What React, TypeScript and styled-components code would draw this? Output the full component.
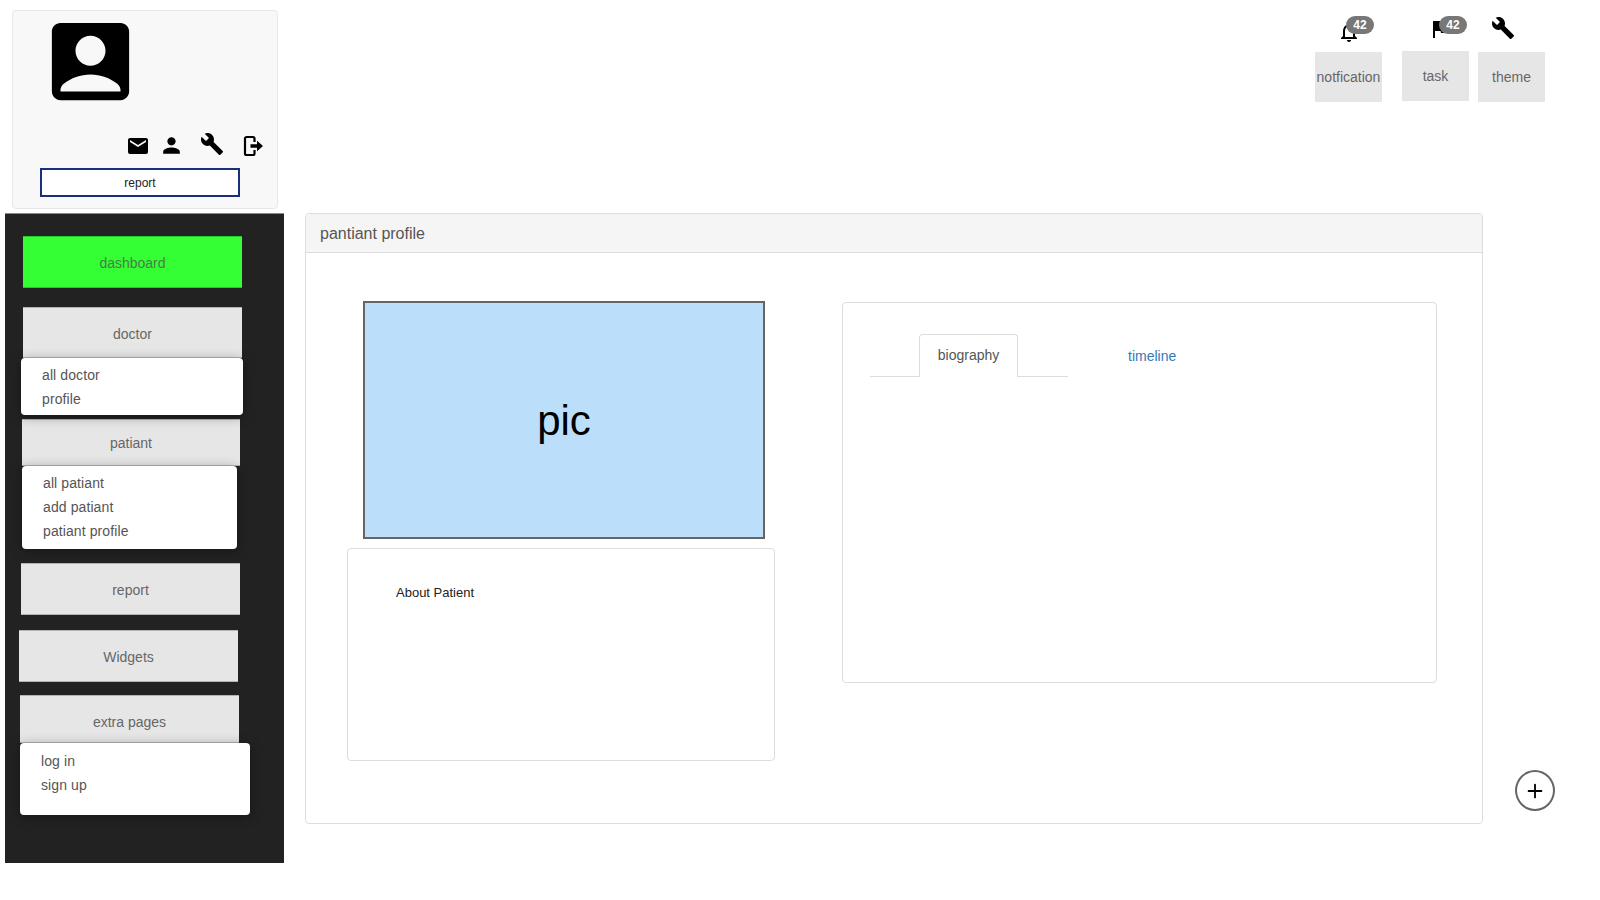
import styled, { createGlobalStyle } from "styled-components";
import {
  MdAccountBox,
  MdBuild,
  MdEmail,
  MdFlag,
  MdNotificationsNone,
  MdPerson,
} from "react-icons/md";
import { Plus } from "lucide-react";

const GlobalStyle = createGlobalStyle`
  html, body {
    margin: 0;
    padding: 0;
    background: #fff;
    font-family: "Liberation Sans", Arial, sans-serif;
    font-size: 14px;
  }
  * { box-sizing: border-box; }
`;

const Page = styled.div`
  position: relative;
  display: flex;
  width: 1600px;
  height: 900px;
  overflow: hidden;
`;

const LeftColumn = styled.div`
  width: 284px;
  flex: none;
  padding-left: 5px;
`;

const UserCard = styled.div`
  width: 266px;
  height: 199px;
  margin: 10px 0 4px 7px;
  background: #f8f8f8;
  border: 1px solid #e8e8e8;
  border-radius: 4px;
  svg { display: block; }
`;

const Avatar = styled.div`
  margin: -1px 0 0 26px;
  height: 122px;
  line-height: 0;
`;

const ActionRow = styled.div`
  display: flex;
  align-items: flex-start;
  height: 36px;
  margin-left: 113px;
`;

const ActionIcon = styled.span<{ $gap: number; $top: number }>`
  margin-left: ${(p) => p.$gap}px;
  margin-top: ${(p) => p.$top}px;
  color: #000;
`;

const ReportButton = styled.button`
  display: block;
  width: 200px;
  height: 29px;
  margin-left: 27px;
  padding: 0;
  background: #fff;
  border: 2px solid #1a2f7c;
  color: #222;
  font: 12px "Liberation Sans", Arial, sans-serif;
`;

const Sidebar = styled.nav`
  height: 650px;
  padding-top: 22px;
  background: #222222;
  border-top: 1px solid #8a8a8a;
`;

const NavButton = styled.div<{
  $active?: boolean;
  $left: number;
  $top: number;
  $width?: number;
  $height: number;
  $pad?: number;
}>`
  display: flex;
  align-items: center;
  justify-content: center;
  width: ${(p) => p.$width ?? 219}px;
  height: ${(p) => p.$height}px;
  margin-left: ${(p) => p.$left}px;
  margin-top: ${(p) => p.$top}px;
  padding-top: ${(p) => p.$pad ?? 2}px;
  background: ${(p) => (p.$active ? "#33ff33" : "#e6e6e6")};
  border-top: 1px solid rgba(0, 0, 0, 0.22);
  border-bottom: 1px solid rgba(0, 0, 0, 0.22);
  color: ${(p) => (p.$active ? "#4b7d4b" : "#666666")};
  font-size: 14px;
`;

const NavMenu = styled.ul<{
  $left: number;
  $width: number;
  $height: number;
  $pad?: number;
}>`
  position: relative;
  list-style: none;
  width: ${(p) => p.$width}px;
  height: ${(p) => p.$height}px;
  margin: 0 0 0 ${(p) => p.$left}px;
  padding: ${(p) => p.$pad ?? 5}px 0 0 21px;
  background: #fff;
  border-radius: 4px;
  box-shadow: 0 2px 12px rgba(0, 0, 0, 0.35);
  color: #555555;
  font-size: 14px;
  letter-spacing: 0.1px;
  line-height: 24px;
`;

const RightColumn = styled.div`
  flex: 1;
  min-width: 0;
`;

const TopBar = styled.header`
  display: flex;
  justify-content: flex-end;
  height: 213px;
  padding-right: 55px;
`;

const Tool = styled.div<{ $gap: number }>`
  position: relative;
  width: 67px;
  margin-left: ${(p) => p.$gap}px;
`;

const ToolIcon = styled.div<{ $left: number; $top: number; $height?: number }>`
  height: ${(p) => p.$height ?? 52}px;
  padding-left: ${(p) => p.$left}px;
  padding-top: ${(p) => p.$top}px;
  color: #000;
  svg { display: block; }
`;

const ToolButton = styled.div`
  display: flex;
  align-items: center;
  justify-content: center;
  height: 50px;
  background: #e6e6e6;
  color: #666666;
  font-size: 14px;
  white-space: nowrap;
`;

const CountBadge = styled.span<{ $left: number }>`
  position: absolute;
  top: 16px;
  left: ${(p) => p.$left}px;
  width: 28px;
  height: 18px;
  background: #777777;
  border-radius: 9px;
  color: #fff;
  font-size: 12px;
  font-weight: 700;
  line-height: 18px;
  text-align: center;
`;

const Panel = styled.section`
  width: 1178px;
  height: 611px;
  margin-left: 21px;
  background: #fff;
  border: 1px solid #dddddd;
  border-radius: 4px;
`;

const PanelHeader = styled.div`
  height: 39px;
  padding: 0 14px;
  background: #f5f5f5;
  border-bottom: 1px solid #dddddd;
  border-radius: 3px 3px 0 0;
  color: #555555;
  font-size: 16px;
  line-height: 40px;
`;

const PanelBody = styled.div`
  display: flex;
  align-items: flex-start;
  padding: 48px 0 0 41px;
`;

const ProfileColumn = styled.div`
  width: 428px;
  flex: none;
`;

const Picture = styled.div`
  display: flex;
  align-items: center;
  justify-content: center;
  width: 402px;
  height: 238px;
  margin-left: 16px;
  padding-top: 2px;
  background: #bbdefb;
  border: 2px solid #666666;
  color: #000;
  font-size: 42px;
`;

const AboutCard = styled.div`
  height: 213px;
  margin-top: 9px;
  padding: 35px 48px;
  background: #fff;
  border: 1px solid #dddddd;
  border-radius: 4px;
  color: #222222;
  font-size: 13px;
  line-height: 18px;
`;

const TabsCard = styled.div`
  width: 595px;
  height: 381px;
  margin: 1px 0 0 67px;
  padding: 31px 0 0 27px;
  border: 1px solid #dddddd;
  border-radius: 4px;
`;

const TabStrip = styled.div`
  display: flex;
  align-items: flex-end;
  height: 43px;
`;

const TabFiller = styled.span<{ $width: number }>`
  width: ${(p) => p.$width}px;
  border-bottom: 1px solid #dddddd;
`;

const ActiveTab = styled.span`
  display: flex;
  align-items: center;
  justify-content: center;
  width: 99px;
  height: 43px;
  padding-bottom: 2px;
  background: #fff;
  border: 1px solid #dddddd;
  border-bottom: none;
  border-radius: 4px 4px 0 0;
  color: #555555;
  font-size: 14px;
`;

const TabLink = styled.a`
  align-self: center;
  margin-left: 60px;
  padding-top: 1px;
  color: #337ab7;
  font-size: 14px;
`;

const FloatingButton = styled.button`
  position: absolute;
  left: 1515px;
  top: 770px;
  display: flex;
  align-items: center;
  justify-content: center;
  width: 40px;
  height: 41px;
  padding: 0;
  background: #fff;
  border: 2px solid #666666;
  border-radius: 50%;
  color: #000;
`;

const LogoutIcon = () => (
  <svg width="24" height="24" viewBox="0 0 24 24" fill="none">
    <path
      d="M13.5 8V4.6a1.6 1.6 0 0 0-1.6-1.6H5.6A1.6 1.6 0 0 0 4 4.6v14.8A1.6 1.6 0 0 0 5.6 21h6.3a1.6 1.6 0 0 0 1.6-1.6V16"
      stroke="#000"
      strokeWidth="2.2"
    />
    <path d="M9.5 10.2h6.5V6.8l6 5.2-6 5.2v-3.4H9.5z" fill="#000" />
  </svg>
);

export default function App() {
  return (
    <>
      <GlobalStyle />
      <Page>
        <LeftColumn>
          <UserCard>
            <Avatar>
              <MdAccountBox size={103} />
            </Avatar>
            <ActionRow>
              <ActionIcon $gap={0} $top={2}>
                <MdEmail size={24} />
              </ActionIcon>
              <ActionIcon $gap={9} $top={1}>
                <MdPerson size={25} />
              </ActionIcon>
              <ActionIcon $gap={16} $top={0}>
                <MdBuild size={24} />
              </ActionIcon>
              <ActionIcon $gap={17} $top={2}>
                <LogoutIcon />
              </ActionIcon>
            </ActionRow>
            <ReportButton>report</ReportButton>
          </UserCard>
          <Sidebar>
            <NavButton $active $left={18} $top={0} $height={52} $pad={1}>
              dashboard
            </NavButton>
            <NavButton $left={18} $top={19} $height={51}>
              doctor
            </NavButton>
            <NavMenu $left={16} $width={222} $height={57}>
              <li>all doctor</li>
              <li>profile</li>
            </NavMenu>
            <NavButton $left={17} $top={4} $width={218} $height={47} $pad={0}>
              patiant
            </NavButton>
            <NavMenu $left={17} $width={215} $height={83}>
              <li>all patiant</li>
              <li>add patiant</li>
              <li>patiant profile</li>
            </NavMenu>
            <NavButton $left={16} $top={14} $height={52}>
              report
            </NavButton>
            <NavButton $left={14} $top={15} $height={52}>
              Widgets
            </NavButton>
            <NavButton $left={15} $top={13} $height={48} $pad={5}>
              extra pages
            </NavButton>
            <NavMenu $left={15} $width={230} $height={72} $pad={6}>
              <li>log in</li>
              <li>sign up</li>
            </NavMenu>
          </Sidebar>
        </LeftColumn>
        <RightColumn>
          <TopBar>
            <Tool $gap={0}>
              <ToolIcon $left={22} $top={20}>
                <MdNotificationsNone size={24} />
              </ToolIcon>
              <CountBadge $left={31}>42</CountBadge>
              <ToolButton>notfication</ToolButton>
            </Tool>
            <Tool $gap={20}>
              <ToolIcon $left={26} $top={17} $height={51}>
                <MdFlag size={24} />
              </ToolIcon>
              <CountBadge $left={37}>42</CountBadge>
              <ToolButton>task</ToolButton>
            </Tool>
            <Tool $gap={9}>
              <ToolIcon $left={13} $top={16}>
                <MdBuild size={24} />
              </ToolIcon>
              <ToolButton>theme</ToolButton>
            </Tool>
          </TopBar>
          <Panel>
            <PanelHeader>pantiant profile</PanelHeader>
            <PanelBody>
              <ProfileColumn>
                <Picture>pic</Picture>
                <AboutCard>About Patient</AboutCard>
              </ProfileColumn>
              <TabsCard>
                <TabStrip>
                  <TabFiller $width={49} />
                  <ActiveTab>biography</ActiveTab>
                  <TabFiller $width={50} />
                  <TabLink>timeline</TabLink>
                </TabStrip>
              </TabsCard>
            </PanelBody>
          </Panel>
        </RightColumn>
        <FloatingButton>
          <Plus size={22} strokeWidth={2} />
        </FloatingButton>
      </Page>
    </>
  );
}
